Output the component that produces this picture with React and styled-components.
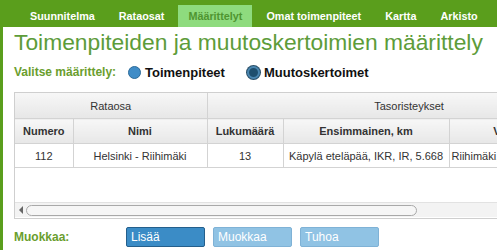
import React from "react";
import styled, { createGlobalStyle } from "styled-components";

const Global = createGlobalStyle`
  html, body { margin: 0; padding: 0; background: #fff; overflow: hidden; }
  body { font-family: "Liberation Sans", Arial, sans-serif; }
`;

const Page = styled.div`
  width: 497px;
  height: 250px;
  overflow: hidden;
  display: flex;
  flex-direction: column;
`;

const Nav = styled.nav`
  height: 27px;
  background: #5a9e1c;
  display: flex;
  align-items: flex-end;
  padding-left: 20px;
  gap: 4px;
  flex-shrink: 0;
`;

const Tab = styled.div`
  height: 22px;
  display: flex;
  align-items: center;
  padding: 0 10px;
  font-size: 10.8px;
  font-weight: bold;
  white-space: nowrap;
  color: ${(p) => (p.$active ? "#4f9530" : "#ffffff")};
  background: ${(p) => (p.$active ? "#8edb7e" : "transparent")};
`;

const Body = styled.div`
  flex: 1;
  border-left: 3px solid #5a9e1c;
  padding-left: 11px;
  display: flex;
  flex-direction: column;
`;

const Title = styled.h1`
  margin: 0;
  font-weight: normal;
  font-size: 22.8px;
  line-height: 31px;
  color: #5d9c3a;
  white-space: nowrap;
`;

const ChoiceRow = styled.div`
  display: flex;
  align-items: center;
  height: 28px;
  margin-bottom: 6px;
`;

const Label = styled.span`
  font-size: 12px;
  font-weight: bold;
  color: #6a9e2e;
  width: ${(p) => p.$w}px;
  flex-shrink: 0;
`;

const Radio = styled.span`
  display: inline-flex;
  align-items: center;
  gap: 4px;
  font-size: 13px;
  font-weight: bold;
  color: #111;
  margin-right: 22px;
`;

const Dot = styled.span`
  width: 13px;
  height: 13px;
  border-radius: 50%;
  box-sizing: border-box;
  background: ${(p) => (p.$checked ? "#1f4f6e" : "#3f8cc7")};
  border: ${(p) => (p.$checked ? "2px solid #4a86b0" : "1px solid #2c6b99")};
  box-shadow: ${(p) => (p.$checked ? "0 0 0 1px #2a4f68" : "none")};
`;

const Grid = styled.div`
  width: 600px;
  height: 127px;
  box-sizing: border-box;
  border: 1px solid #cfcfcf;
  border-right: none;
  display: flex;
  flex-direction: column;
  flex-shrink: 0;
`;

const Table = styled.table`
  border-collapse: collapse;
  table-layout: fixed;
  width: 596px;
  font-size: 11px;
  color: #333;
`;

const Th = styled.th`
  height: ${(p) => p.$h}px;
  padding: 0;
  border: 1px solid #d3d3d3;
  border-top: none;
  background: linear-gradient(#f7f7f7, #e7e7e7);
  font-weight: ${(p) => (p.$bold ? "bold" : "normal")};
  text-align: center;
  white-space: nowrap;
  overflow: hidden;
  color: #333;
  &:first-child { border-left: none; }
`;

const Td = styled.td`
  height: 23px;
  padding: 0 2px;
  border: 1px solid #d3d3d3;
  text-align: ${(p) => p.$align || "center"};
  white-space: nowrap;
  overflow: hidden;
  &:first-child { border-left: none; }
`;

const Spacer = styled.div`
  flex: 1;
`;

const Scrollbar = styled.div`
  height: 14px;
  margin-bottom: 1px;
  background: #f3f3f3;
  border-top: 1px solid #e2e2e2;
  display: flex;
  align-items: center;
  padding-left: 4px;
  gap: 3px;
`;

const Arrow = styled.span`
  width: 0;
  height: 0;
  border-top: 4px solid transparent;
  border-bottom: 4px solid transparent;
  border-right: 4px solid #666;
`;

const Thumb = styled.div`
  width: 391px;
  height: 11px;
  box-sizing: border-box;
  border: 1px solid #a9a9a9;
  border-radius: 6px;
  background: #f6f6f6;
`;

const Actions = styled.div`
  display: flex;
  align-items: center;
  margin-top: 8px;
  gap: 8px;
`;

const Button = styled.button`
  width: 79px;
  height: 20px;
  box-sizing: border-box;
  padding: 0 4px;
  text-align: left;
  font-family: inherit;
  font-size: 12px;
  color: #fff;
  border-radius: 2px;
  border: 1px solid ${(p) => (p.$primary ? "#245f8c" : "#7fb2d6")};
  background: ${(p) => (p.$primary ? "#3b8cc6" : "#90c3e4")};
`;

const cols = [58, 134, 76, 166, 162];

export default function App() {
  return (
    <>
      <Global />
      <Page>
        <Nav>
          <Tab>Suunnitelma</Tab>
          <Tab>Rataosat</Tab>
          <Tab $active>Määrittelyt</Tab>
          <Tab>Omat toimenpiteet</Tab>
          <Tab>Kartta</Tab>
          <Tab>Arkisto</Tab>
        </Nav>
        <Body>
          <Title>Toimenpiteiden ja muutoskertoimien määrittely</Title>
          <ChoiceRow>
            <Label $w={114}>Valitse määrittely:</Label>
            <Radio>
              <Dot />
              Toimenpiteet
            </Radio>
            <Radio>
              <Dot $checked />
              Muutoskertoimet
            </Radio>
          </ChoiceRow>
          <Grid>
            <Table>
              <colgroup>
                {cols.map((w, i) => (
                  <col key={i} style={{ width: w }} />
                ))}
              </colgroup>
              <thead>
                <tr>
                  <Th $h={25} colSpan={2}>Rataosa</Th>
                  <Th $h={25} colSpan={3}>Tasoristeykset</Th>
                </tr>
                <tr>
                  <Th $h={24} $bold>Numero</Th>
                  <Th $h={24} $bold>Nimi</Th>
                  <Th $h={24} $bold>Lukumäärä</Th>
                  <Th $h={24} $bold>Ensimmainen, km</Th>
                  <Th $h={24} $bold>Viimeinen, km</Th>
                </tr>
              </thead>
              <tbody>
                <tr>
                  <Td>112</Td>
                  <Td>Helsinki - Riihimäki</Td>
                  <Td>13</Td>
                  <Td>Käpylä eteläpää, IKR, IR, 5.668</Td>
                  <Td $align="left">Riihimäki, IKR, IR, 69.1</Td>
                </tr>
              </tbody>
            </Table>
            <Spacer />
            <Scrollbar>
              <Arrow />
              <Thumb />
            </Scrollbar>
          </Grid>
          <Actions>
            <Label $w={104}>Muokkaa:</Label>
            <Button $primary>Lisää</Button>
            <Button>Muokkaa</Button>
            <Button>Tuhoa</Button>
          </Actions>
        </Body>
      </Page>
    </>
  );
}
